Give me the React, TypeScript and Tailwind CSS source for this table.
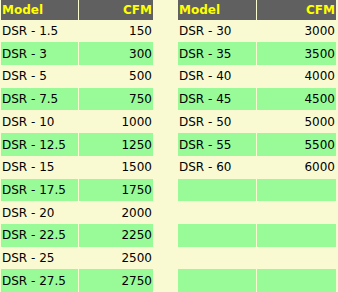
const left: [string, string][] = [
  ["DSR - 1.5", "150"],
  ["DSR - 3", "300"],
  ["DSR - 5", "500"],
  ["DSR - 7.5", "750"],
  ["DSR - 10", "1000"],
  ["DSR - 12.5", "1250"],
  ["DSR - 15", "1500"],
  ["DSR - 17.5", "1750"],
  ["DSR - 20", "2000"],
  ["DSR - 22.5", "2250"],
  ["DSR - 25", "2500"],
  ["DSR - 27.5", "2750"],
]

const right: [string, string][] = [
  ["DSR - 30", "3000"],
  ["DSR - 35", "3500"],
  ["DSR - 40", "4000"],
  ["DSR - 45", "4500"],
  ["DSR - 50", "5000"],
  ["DSR - 55", "5500"],
  ["DSR - 60", "6000"],
  ["", ""],
  ["", ""],
  ["", ""],
  ["", ""],
  ["", ""],
]

function Table({ rows, c1, c2 }: { rows: [string, string][]; c1: string; c2: string }) {
  return (
    <div className="flex flex-col">
      <div className="flex h-[20px] gap-[1px] font-bold text-[#ffff00]">
        <div className={`${c1} flex items-center bg-[#606060] pl-[1px]`}>Model</div>
        <div className={`${c2} flex items-center justify-end bg-[#606060] pr-[1px]`}>CFM</div>
      </div>
      {rows.map(([model, cfm], i) => {
        const bg = i % 2 === 1 ? "bg-[#98fb98]" : ""
        return (
          <div key={i} className="flex h-[23px] gap-[1px]">
            <div className={`${c1} ${bg} flex items-center pl-[1px]`}>{model}</div>
            <div className={`${c2} ${bg} flex items-center justify-end pr-[1px]`}>{cfm}</div>
          </div>
        )
      })}
    </div>
  )
}

export default function App() {
  return (
    <div className="flex h-[292px] w-[338px] gap-[25px] overflow-hidden bg-[#fafad2] pl-[1px] font-['DejaVu_Sans',Verdana,sans-serif] text-[12px] text-black">
      <Table rows={left} c1="w-[77px]" c2="w-[74px]" />
      <Table rows={right} c1="w-[78px]" c2="w-[79px]" />
    </div>
  )
}
